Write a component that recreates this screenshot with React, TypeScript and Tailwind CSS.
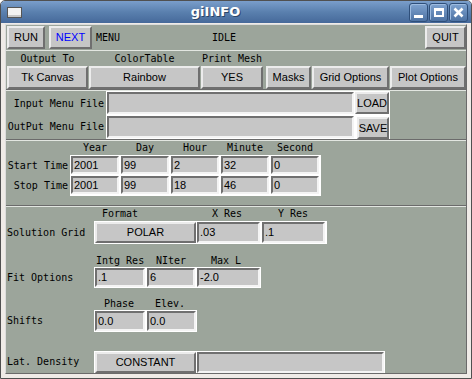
import React from "react";

const btn =
  "flex items-center justify-center bg-[#c6c6c6] border-2 border-t-[#ececec] border-l-[#ececec] border-b-[#6f6f6f] border-r-[#6f6f6f] text-[11px] text-black font-['Liberation_Sans',sans-serif] leading-none box-border";
const ent =
  "flex items-center bg-[#c6c6c6] border-2 border-t-[#707070] border-l-[#707070] border-b-[#f4f4f4] border-r-[#f4f4f4] text-[11px] text-black font-['Liberation_Sans',sans-serif] leading-none box-border pl-[1px]";
const mono = "font-['DejaVu_Sans_Mono',monospace] text-[10px] leading-none text-black";

function TitleBar() {
  return (
    <div className="h-[22px] flex items-center bg-gradient-to-b from-[#7a9ecb] via-[#5a80ae] to-[#46699a] relative">
      <div className="ml-[6px] w-[15px] h-[11px] bg-[#f2f2f2] border border-[#555] shadow-[inset_0_-2px_0_#c8c8c8]" />
      <div className="flex-1 flex justify-center">
        <span className="text-white font-bold text-[13px] font-['DejaVu_Sans',sans-serif] [text-shadow:1px_1px_0_#2c4668]">
          giINFO
        </span>
      </div>
      <div className="flex gap-[1px] mr-[3px] mt-[1px]">
        {[0, 1, 2].map((i) => (
          <div
            key={i}
            className="w-[19px] h-[19px] rounded-[3px] border border-[#2f4f7a] bg-gradient-to-b from-[#7ea2cf] to-[#4d72a3] flex items-center justify-center shadow-[inset_1px_1px_0_#9dbbe0]"
          >
            {i === 0 && <div className="w-[9px] h-[3px] bg-white mt-[8px]" />}
            {i === 1 && <div className="w-[10px] h-[9px] border-2 border-white border-t-[3px]" />}
            {i === 2 && (
              <svg width="11" height="11" viewBox="0 0 11 11">
                <path d="M1.5 1.5 L9.5 9.5 M9.5 1.5 L1.5 9.5" stroke="white" strokeWidth="2.6" />
              </svg>
            )}
          </div>
        ))}
      </div>
    </div>
  );
}

export default function App() {
  return (
    <div className="w-[472px] h-[379px] bg-[#efebe7] border border-[#505050] rounded-t-[5px] overflow-hidden flex flex-col box-border">
      <TitleBar />
      <div className="mt-[1px] ml-[4px] mr-[4px] h-[350px] border border-t-[#dcdcdc] border-l-[#dcdcdc] border-b-[#6a6a6a] border-r-[#6a6a6a] bg-[#9ca59b] flex flex-col box-border">
        {/* Row 1 */}
        <div className="h-[25px] flex items-center shrink-0">
          <div className={`${btn} ml-[1px] w-[38px] h-[23px]`}>RUN</div>
          <div className={`${btn} ml-[4px] w-[43px] h-[23px] !text-[#0000ff]`}>NEXT</div>
          <span className={`${mono} ml-[4px] w-[24px]`}>MENU</span>
          <span className={`${mono} ml-[92px]`}>IDLE</span>
          <div className="flex-1" />
          <div className={`${btn} w-[41px] h-[23px]`}>QUIT</div>
        </div>

        {/* Section 2 */}
        <div className="h-[40px] shrink-0 border-t border-b border-t-[#e2e6e1] border-b-[#6b6b6b] flex box-border">
          {[
            { l: "Output To", b: "Tk Canvas", w: "w-[81px]", m: "ml-[1px]" },
            { l: "ColorTable", b: "Rainbow", w: "w-[111px]", m: "ml-[1px]" },
            { l: "Print Mesh", b: "YES", w: "w-[62px]", m: "ml-[1px]" },
            { l: "", b: "Masks", w: "w-[45px]", m: "ml-[3px]" },
            { l: "", b: "Grid Options", w: "w-[77px]", m: "ml-[1px]" },
            { l: "", b: "Plot Options", w: "w-[76px]", m: "ml-[1px]" },
          ].map((c) => (
            <div key={c.b} className={`flex flex-col items-center ${c.m} ${c.w}`}>
              <div className={`${mono} h-[15px] flex items-center`}>{c.l}</div>
              <div className={`${btn} ${c.w} h-[23px]`}>{c.b}</div>
            </div>
          ))}
        </div>

        {/* Section 3 */}
        <div className="h-[50px] shrink-0 border-t border-b border-t-[#e2e6e1] border-b-[#6b6b6b] flex box-border">
          <div className="w-[100px] flex flex-col items-end pr-[2px]">
            <div className={`${mono} h-[24px] pt-[1px] flex items-center`}>Input Menu File</div>
            <div className={`${mono} h-[24px] flex items-center`}>OutPut Menu File</div>
          </div>
          <div className="w-[284px] h-[48px] bg-white flex flex-col p-[1px] gap-[2px] box-border">
            <div className="flex h-[22px]">
              <div className={`${ent} w-[247px] h-[22px]`} />
              <div className={`${btn} ml-[1px] w-[34px] h-[22px]`}>LOAD</div>
            </div>
            <div className="flex h-[22px]">
              <div className={`${ent} w-[247px] h-[22px]`} />
              <div className={`${btn} ml-[3px] mt-[1px] w-[32px] h-[22px]`}>SAVE</div>
            </div>
          </div>
        </div>

        {/* Section 4 */}
        <div className="h-[66px] shrink-0 border-t border-b border-t-[#e2e6e1] border-b-[#6b6b6b] flex flex-col box-border">
          <div className="h-[14px] flex items-center">
            <div className="w-[65px]" />
            <div className="flex gap-[2px]">
              {["Year", "Day", "Hour", "Minute", "Second"].map((h) => (
                <div key={h} className={`${mono} w-[48px] text-center`}>
                  {h}
                </div>
              ))}
            </div>
          </div>
          <div className="flex">
            <div className="w-[64px] flex flex-col items-end pr-[2px] pt-[1px]">
              <div className={`${mono} h-[20px] flex items-center`}>Start Time</div>
              <div className={`${mono} h-[20px] flex items-center`}>Stop Time</div>
            </div>
            <div className="w-[251px] h-[41px] bg-white pt-[1px] pl-[1px] flex flex-col gap-[2px] box-border">
              {[
                ["2001", "99", "2", "32", "0"],
                ["2001", "99", "18", "46", "0"],
              ].map((r, i) => (
                <div key={i} className="flex gap-[2px]">
                  {r.map((v, j) => (
                    <div key={j} className={`${ent} w-[48px] h-[18px]`}>
                      {v}
                    </div>
                  ))}
                </div>
              ))}
            </div>
          </div>
        </div>

        {/* Section 5 */}
        <div className="flex-1 border-t border-t-[#e2e6e1] flex flex-col box-border">
          {/* Solution grid */}
          <div className="h-[14px] flex items-center">
            <div className="w-[88px]" />
            <div className={`${mono} w-[103px] pl-[8px]`}>Format</div>
            <div className={`${mono} w-[65px] pl-[15px]`}>X Res</div>
            <div className={`${mono} w-[64px] pl-[16px]`}>Y Res</div>
          </div>
          <div className="flex h-[23px] items-center">
            <div className={`${mono} w-[88px] pl-[1px]`}>Solution Grid</div>
            <div className="bg-white h-[23px] p-[1px] flex box-border">
              <div className={`${btn} w-[101px] h-[21px]`}>POLAR</div>
              <div className={`${ent} ml-[1px] w-[63px] h-[21px]`}>.03</div>
              <div className={`${ent} ml-[2px] mr-[1px] w-[63px] h-[21px]`}>.1</div>
            </div>
          </div>

          {/* Fit options */}
          <div className="h-[13px] mt-[10px] flex items-center">
            <div className="w-[88px]" />
            <div className={`${mono} w-[52px] pl-[2px]`}>Intg Res</div>
            <div className={`${mono} w-[50px] pl-[10px]`}>NIter</div>
            <div className={`${mono} w-[65px] pl-[15px]`}>Max L</div>
          </div>
          <div className="flex h-[21px] items-center">
            <div className={`${mono} w-[88px] pl-[1px]`}>Fit Options</div>
            <div className="bg-white h-[21px] p-[1px] flex gap-[2px] box-border">
              <div className={`${ent} w-[50px] h-[19px]`}>.1</div>
              <div className={`${ent} w-[48px] h-[19px]`}>6</div>
              <div className={`${ent} w-[63px] h-[19px]`}>-2.0</div>
            </div>
          </div>

          {/* Shifts */}
          <div className="h-[13px] mt-[9px] flex items-center">
            <div className="w-[88px]" />
            <div className={`${mono} w-[52px] pl-[10px]`}>Phase</div>
            <div className={`${mono} w-[50px] pl-[9px]`}>Elev.</div>
          </div>
          <div className="flex h-[22px] items-center">
            <div className={`${mono} w-[88px] pl-[1px]`}>Shifts</div>
            <div className="bg-white h-[22px] p-[1px] flex gap-[2px] box-border">
              <div className={`${ent} w-[50px] h-[20px]`}>0.0</div>
              <div className={`${ent} w-[49px] h-[20px]`}>0.0</div>
            </div>
          </div>

          {/* Lat density */}
          <div className="flex h-[22px] mt-[19px] items-center">
            <div className={`${mono} w-[88px] pl-[1px]`}>Lat. Density</div>
            <div className="bg-white h-[22px] pt-[1px] px-[1px] flex box-border">
              <div className={`${btn} w-[101px] h-[21px]`}>CONSTANT</div>
              <div className={`${ent} ml-[1px] w-[187px] h-[21px]`} />
            </div>
          </div>
        </div>
      </div>
    </div>
  );
}
